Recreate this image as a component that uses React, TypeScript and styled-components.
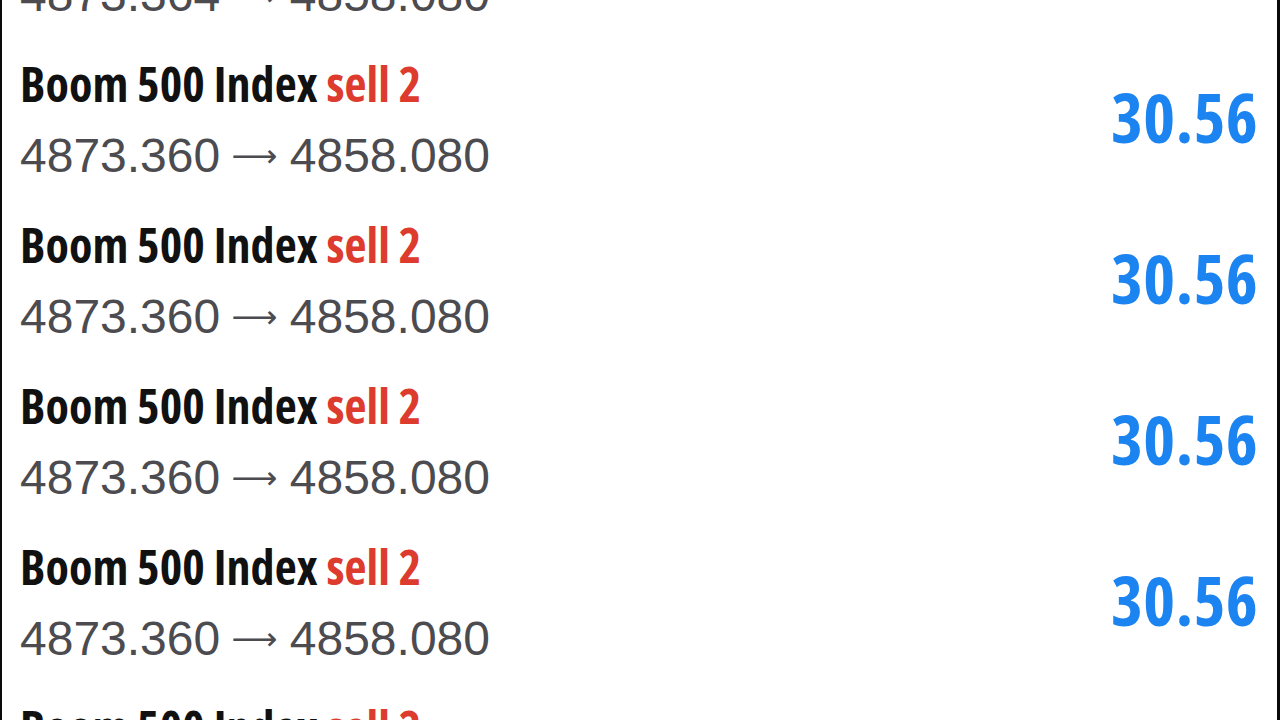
import React from "react";
import styled, { createGlobalStyle } from "styled-components";

const Global = createGlobalStyle`
  html, body { margin: 0; padding: 0; background: #ffffff; }
  body { font-family: "Liberation Sans", Arial, sans-serif; }
`;

const Frame = styled.div`
  box-sizing: border-box;
  width: 1280px;
  height: 720px;
  overflow: hidden;
  background: #ffffff;
  border-left: 2px solid #0a0a0a;
  border-right: 3px solid #0a0a0a;
`;

const List = styled.div`
  display: flex;
  flex-direction: column;
  margin-top: -121px;
`;

const Row = styled.div`
  box-sizing: border-box;
  height: 161px;
  display: flex;
  align-items: center;
  justify-content: space-between;
  padding: 0 19px 0 18px;
`;

const Info = styled.div`
  display: flex;
  flex-direction: column;
  align-self: stretch;
  padding-top: 11px;
`;

const Title = styled.div`
  font-family: "Open Sans", "DejaVu Sans", sans-serif;
  font-stretch: 75%;
  font-weight: 700;
  font-size: 48px;
  line-height: 66px;
  letter-spacing: 0.1px;
  color: #111111;
  white-space: nowrap;
`;

const Side = styled.span<{ $tone: "sell" | "buy" }>`
  color: ${(p) => (p.$tone === "sell" ? "#dc3b2e" : "#1c84f0")};
`;

const Prices = styled.div`
  font-family: "Liberation Sans", Arial, sans-serif;
  font-size: 48px;
  line-height: 77px;
  color: #4b4b50;
  white-space: nowrap;
`;

const Arrow = styled.span`
  font-family: "DejaVu Sans", sans-serif;
  font-size: 32px;
  vertical-align: 5px;
  margin: 0 -1px 0 -2px;
`;

const Profit = styled.div`
  font-family: "Open Sans", "DejaVu Sans", sans-serif;
  font-stretch: 75%;
  font-weight: 700;
  font-size: 68px;
  line-height: 1;
  letter-spacing: 0.4px;
  color: #1c84f0;
  padding-bottom: 8px;
`;

type Trade = {
  symbol: string;
  side: "sell" | "buy";
  volume: string;
  open: string;
  close: string;
  profit: string;
};

const trades: Trade[] = [
  { symbol: "Boom 500 Index", side: "sell", volume: "2", open: "4873.364", close: "4858.080", profit: "30.56" },
  { symbol: "Boom 500 Index", side: "sell", volume: "2", open: "4873.360", close: "4858.080", profit: "30.56" },
  { symbol: "Boom 500 Index", side: "sell", volume: "2", open: "4873.360", close: "4858.080", profit: "30.56" },
  { symbol: "Boom 500 Index", side: "sell", volume: "2", open: "4873.360", close: "4858.080", profit: "30.56" },
  { symbol: "Boom 500 Index", side: "sell", volume: "2", open: "4873.360", close: "4858.080", profit: "30.56" },
  { symbol: "Boom 500 Index", side: "sell", volume: "2", open: "4873.360", close: "4858.080", profit: "30.56" },
];

export default function App() {
  return (
    <>
      <Global />
      <Frame>
        <List>
          {trades.map((t, i) => (
            <Row key={i}>
              <Info>
                <Title>
                  {t.symbol} <Side $tone={t.side}>{t.side} {t.volume}</Side>
                </Title>
                <Prices>
                  {t.open} <Arrow>⟶</Arrow> {t.close}
                </Prices>
              </Info>
              <Profit>{t.profit}</Profit>
            </Row>
          ))}
        </List>
      </Frame>
    </>
  );
}
